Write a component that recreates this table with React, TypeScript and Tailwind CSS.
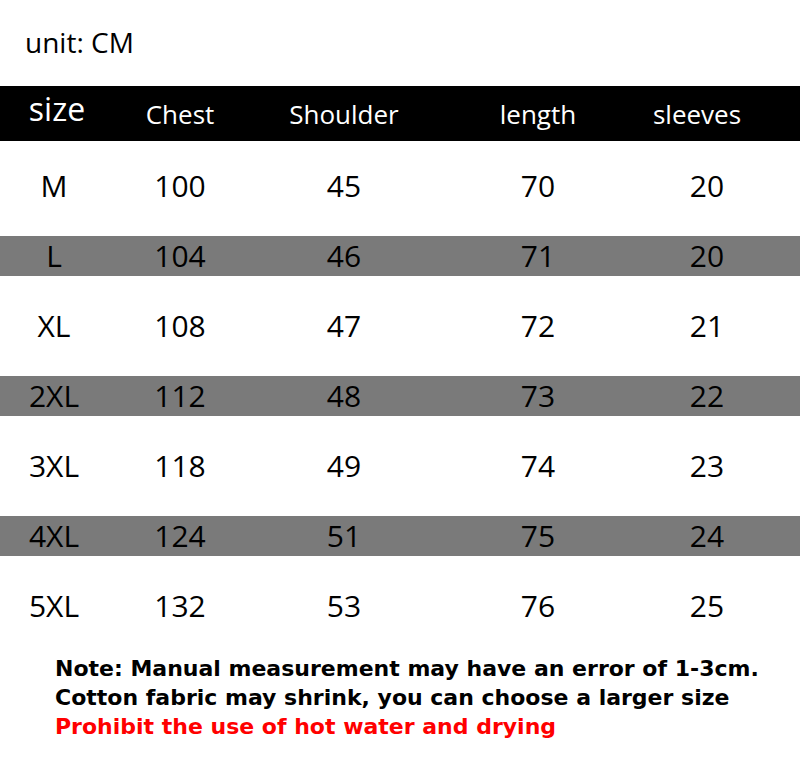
import React from 'react';

const rows = [
  { size: 'M', chest: '100', shoulder: '45', length: '70', sleeves: '20' },
  { size: 'L', chest: '104', shoulder: '46', length: '71', sleeves: '20' },
  { size: 'XL', chest: '108', shoulder: '47', length: '72', sleeves: '21' },
  { size: '2XL', chest: '112', shoulder: '48', length: '73', sleeves: '22' },
  { size: '3XL', chest: '118', shoulder: '49', length: '74', sleeves: '23' },
  { size: '4XL', chest: '124', shoulder: '51', length: '75', sleeves: '24' },
  { size: '5XL', chest: '132', shoulder: '53', length: '76', sleeves: '25' },
];

const cols = 'grid grid-cols-[108px_144px_184px_204px_134px]';

export default function App() {
  return (
    <div className="w-[800px] h-[765px] bg-white text-black font-['Open_Sans','Noto_Sans',sans-serif] overflow-hidden">
      {/* unit */}
      <div className="h-[86px] pl-[25px] pt-[22px] text-[28px] leading-[40px]">unit: CM</div>

      {/* header */}
      <div className={`${cols} h-[55px] bg-black text-white items-center`}>
        <div className="text-center text-[32px] leading-none -mt-[9px] pl-[6px]">size</div>
        <div className="text-center text-[26px] leading-none">Chest</div>
        <div className="text-center text-[26px] leading-none">Shoulder</div>
        <div className="text-center text-[26px] leading-none">length</div>
        <div className="text-center text-[26px] leading-none pr-[20px]">sleeves</div>
      </div>

      {/* rows */}
      <div className="pt-[10px]">
        {rows.map((r, i) => (
          <div key={r.size} className="h-[70px] flex items-center">
            <div
              className={`${cols} w-full h-[40px] items-center text-[30px] leading-none ${
                i % 2 === 1 ? 'bg-[#7a7a7a]' : ''
              }`}
            >
              <div className="text-center">{r.size}</div>
              <div className="text-center">{r.chest}</div>
              <div className="text-center">{r.shoulder}</div>
              <div className="text-center">{r.length}</div>
              <div className="text-center">{r.sleeves}</div>
            </div>
          </div>
        ))}
      </div>

      {/* notes */}
      <div className="pl-[55px] pt-[13px] font-['DejaVu_Sans',sans-serif] font-bold text-[22px] leading-[29px]">
        <div>Note: Manual measurement may have an error of 1-3cm.</div>
        <div>Cotton fabric may shrink, you can choose a larger size</div>
        <div className="text-[#ff0000]">Prohibit the use of hot water and drying</div>
      </div>
    </div>
  );
}
